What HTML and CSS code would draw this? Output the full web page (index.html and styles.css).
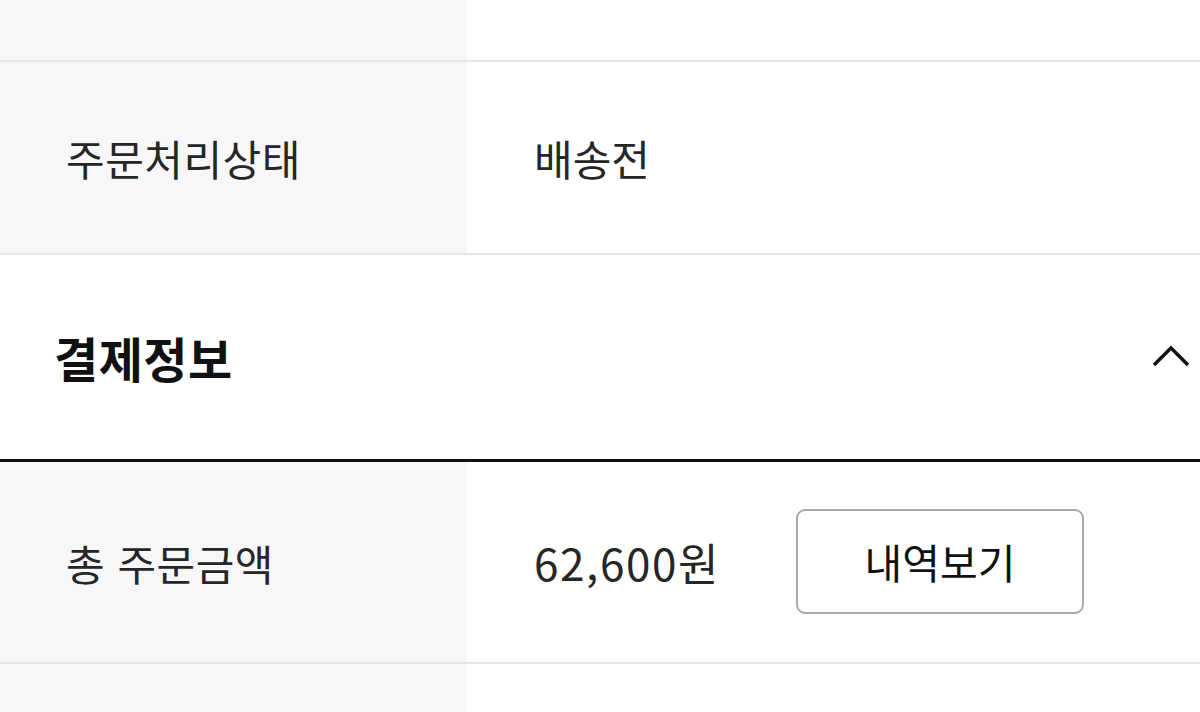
FILE: index.html
```html
<!DOCTYPE html>
<html lang="ko">
<head>
<meta charset="utf-8">
<link rel="stylesheet" href="styles.css">
</head>
<body>
<div class="page">
  <div class="row row-top">
    <div class="label"></div>
    <div class="value"></div>
  </div>
  <div class="row row-status">
    <div class="label">주문처리상태</div>
    <div class="value">배송전</div>
  </div>
  <div class="section-head">
    <h2 class="section-title">결제정보</h2>
    <svg class="chevron" width="40" height="24" viewBox="0 0 40 24"><path d="M3 21 L20 4 L37 21" fill="none" stroke="#111" stroke-width="3.4"/></svg>
  </div>
  <div class="row row-total">
    <div class="label">총 주문금액</div>
    <div class="value"><span class="amount">62,600원</span><button class="btn">내역보기</button></div>
  </div>
  <div class="row row-bottom">
    <div class="label"></div>
    <div class="value"></div>
  </div>
</div>
</body>
</html>
```
FILE: styles.css
```css
html, body {
  margin: 0;
  padding: 0;
  background: #fff;
}
body {
  font-family: "Noto Sans CJK KR", "Noto Sans", sans-serif;
  color: #262626;
  width: 1200px;
  height: 712px;
  overflow: hidden;
}
.page {
  display: flex;
  flex-direction: column;
}
.row {
  display: grid;
  grid-template-columns: 467px 1fr;
  border-bottom: 2px solid #e6e6e8;
}
.label {
  background: #f7f7f9;
  display: flex;
  align-items: center;
  padding-left: 66px;
  font-size: 42px;
  letter-spacing: 0.5px;
}
.value {
  display: flex;
  align-items: center;
  padding-left: 67px;
  font-size: 42px;
}
.row-top { height: 60px; }
.row-status { height: 191px; }
.row-total { height: 200px; }
.row-bottom { height: 60px; border-bottom: none; }
.section-head {
  height: 204px;
  display: flex;
  align-items: center;
  justify-content: space-between;
  padding: 0 9px 0 54px;
  border-bottom: 3px solid #111;
}
.section-title {
  margin: 0;
  font-size: 48px;
  font-weight: 700;
  color: #111;
  letter-spacing: 0.5px;
}
.chevron { display: block; margin-top: -2px; }
.amount {
  width: 262px;
  font-size: 44px;
  letter-spacing: 1.6px;
}
.btn {
  width: 288px;
  height: 105px;
  border: 2px solid #a9a9a9;
  border-radius: 9px;
  background: #fff;
  font-family: "Noto Sans CJK KR", "Noto Sans", sans-serif;
  font-size: 41px;
  color: #111;
  padding: 0;
  margin-top: -2px;
}
```
